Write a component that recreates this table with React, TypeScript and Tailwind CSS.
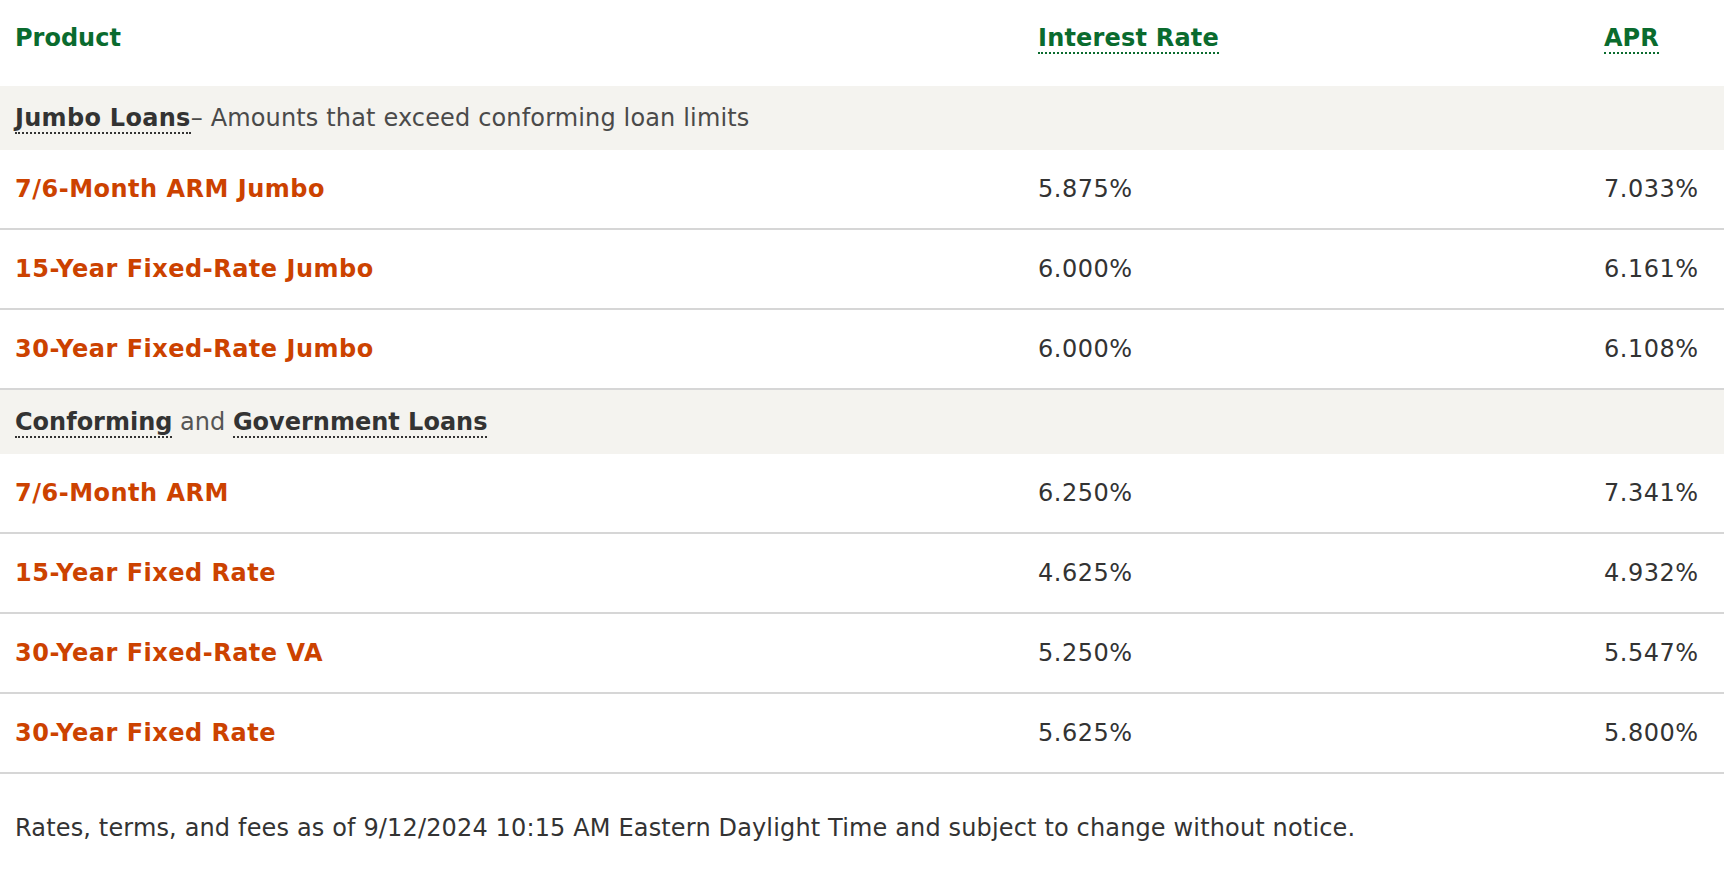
import React from "react";

type Row = { name: string; rate: string; apr: string };

const jumbo: Row[] = [
  { name: "7/6-Month ARM Jumbo", rate: "5.875%", apr: "7.033%" },
  { name: "15-Year Fixed-Rate Jumbo", rate: "6.000%", apr: "6.161%" },
  { name: "30-Year Fixed-Rate Jumbo", rate: "6.000%", apr: "6.108%" },
];

const conforming: Row[] = [
  { name: "7/6-Month ARM", rate: "6.250%", apr: "7.341%" },
  { name: "15-Year Fixed Rate", rate: "4.625%", apr: "4.932%" },
  { name: "30-Year Fixed-Rate VA", rate: "5.250%", apr: "5.547%" },
  { name: "30-Year Fixed Rate", rate: "5.625%", apr: "5.800%" },
];

function DataRow({ row }: { row: Row }) {
  return (
    <div className="grid grid-cols-[1023px_566px_1fr] h-[80px] items-center border-b-2 border-[#d6d6d6]">
      <div className="px-[15px] font-bold tracking-[0.5px] text-[#cc4200]">{row.name}</div>
      <div className="px-[15px] tracking-[0.5px] text-[#333333]">{row.rate}</div>
      <div className="px-[15px] tracking-[0.5px] text-[#333333]">{row.apr}</div>
    </div>
  );
}

export default function App() {
  return (
    <div
      className="w-[1724px] bg-white text-[24px] leading-[28px] text-[#333333]"
      style={{ fontFamily: '"DejaVu Sans", Verdana, sans-serif' }}
    >
      <div className="grid grid-cols-[1023px_566px_1fr] h-[86px] pt-[20px] leading-[36px] font-bold text-[#0a6b2e]">
        <div className="px-[15px]">Product</div>
        <div className="px-[15px]">
          <span className="border-b-2 border-dotted border-[#0a6b2e] tracking-[0.2px]">Interest Rate</span>
        </div>
        <div className="px-[15px]">
          <span className="border-b-2 border-dotted border-[#0a6b2e]">APR</span>
        </div>
      </div>

      <div className="h-[64px] flex items-center px-[15px] bg-[#f4f3ef]">
        <span>
          <span className="font-bold tracking-[0.3px] text-[#333333] border-b-2 border-dotted border-[#333333]">Jumbo Loans</span>
          <span className="text-[#4a4a4a] tracking-[0.15px]">– Amounts that exceed conforming loan limits</span>
        </span>
      </div>
      {jumbo.map((r) => (
        <DataRow key={r.name} row={r} />
      ))}

      <div className="h-[64px] flex items-center px-[15px] bg-[#f4f3ef]">
        <span>
          <span className="font-bold text-[#333333] border-b-2 border-dotted border-[#333333]">Conforming</span>
          <span className="text-[#555555]"> and </span>
          <span className="font-bold text-[#333333] border-b-2 border-dotted border-[#333333]">Government Loans</span>
        </span>
      </div>
      {conforming.map((r) => (
        <DataRow key={r.name} row={r} />
      ))}

      <p className="mt-[36px] px-[15px] leading-[36px] tracking-[0.15px] text-[#333333]">
        Rates, terms, and fees as of 9/12/2024 10:15 AM Eastern Daylight Time and subject to change without notice.
      </p>
    </div>
  );
}
